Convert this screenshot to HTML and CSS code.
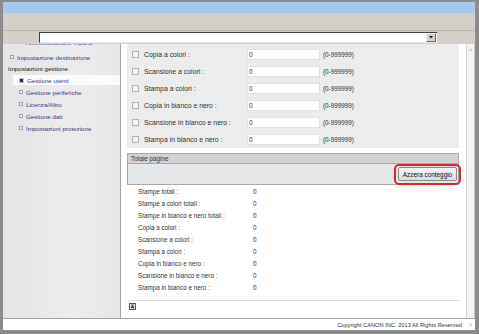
FILE: index.html
```html
<!DOCTYPE html>
<html>
  <head>
    <meta charset="UTF-8" />
    <title>Gestione utenti | Contatore</title>
    <link rel="stylesheet" href="styles.css">
  </head>
  <body>
    <div class="window">
      <div class="titlebar"></div>
      <div class="toolbar"></div>
      <div class="address">
        <div class="address-field">
          <span class="drop">
            <svg viewBox="0 0 5 3" class="drop-arrow"><path d="M0 0h5L2.5 3z"></path></svg>
          </span>
        </div>
      </div>
      <div class="content">
        <ul class="menu">
          <li class="menu-item menu-cut"><span class="bullet"></span>Amministrazione reparto</li>
          <li class="menu-item menu-top"><span class="bullet"></span>Impostazione destinazione</li>
          <li class="menu-group">Impostazioni gestione</li>
          <li class="menu-item menu-sub active"><span class="bullet"></span>Gestione utenti</li>
          <li class="menu-item menu-sub"><span class="bullet"></span>Gestione periferiche</li>
          <li class="menu-item menu-sub"><span class="bullet"></span>Licenza/Altro</li>
          <li class="menu-item menu-sub"><span class="bullet"></span>Gestione dati</li>
          <li class="menu-item menu-sub"><span class="bullet"></span>Impostazioni protezione</li>
        </ul>
        <div class="main">
          <div class="limits">
            <div class="limit-row">
              <span class="check"></span>
              <span class="limit-label">Copia a colori :</span>
              <input type="text" class="limit-input" value="0" />
              <span class="limit-range">(0-999999)</span>
            </div>
            <div class="limit-row">
              <span class="check"></span>
              <span class="limit-label">Scansione a colori :</span>
              <input type="text" class="limit-input" value="0" />
              <span class="limit-range">(0-999999)</span>
            </div>
            <div class="limit-row">
              <span class="check"></span>
              <span class="limit-label">Stampa a colori :</span>
              <input type="text" class="limit-input" value="0" />
              <span class="limit-range">(0-999999)</span>
            </div>
            <div class="limit-row">
              <span class="check"></span>
              <span class="limit-label">Copia in bianco e nero :</span>
              <input type="text" class="limit-input" value="0" />
              <span class="limit-range">(0-999999)</span>
            </div>
            <div class="limit-row">
              <span class="check"></span>
              <span class="limit-label">Scansione in bianco e nero :</span>
              <input type="text" class="limit-input" value="0" />
              <span class="limit-range">(0-999999)</span>
            </div>
            <div class="limit-row">
              <span class="check"></span>
              <span class="limit-label">Stampa in bianco e nero :</span>
              <input type="text" class="limit-input" value="0" />
              <span class="limit-range">(0-999999)</span>
            </div>
          </div>

          <div class="section-head">Totale pagine</div>
          <div class="section-bar">
            <div class="reset-wrap">
              <button class="reset">Azzera conteggio</button>
              <span class="callout"></span>
            </div>
          </div>

          <div class="totals">
            <div class="total-row"><span class="total-label">Stampe totali :</span><span>0</span></div>
            <div class="total-row"><span class="total-label">Stampe a colori totali :</span><span>0</span></div>
            <div class="total-row"><span class="total-label">Stampe in bianco e nero totali :</span><span>0</span></div>
            <div class="total-row"><span class="total-label">Copia a colori :</span><span>0</span></div>
            <div class="total-row"><span class="total-label">Scansione a colori :</span><span>0</span></div>
            <div class="total-row"><span class="total-label">Stampa a colori :</span><span>0</span></div>
            <div class="total-row"><span class="total-label">Copia in bianco e nero :</span><span>0</span></div>
            <div class="total-row"><span class="total-label">Scansione in bianco e nero :</span><span>0</span></div>
            <div class="total-row"><span class="total-label">Stampa in bianco e nero :</span><span>0</span></div>
          </div>

          <div class="page-end">
            <svg viewBox="0 0 7 7" class="to-top">
              <rect x="0.5" y="0.5" width="6" height="6" fill="#f4f4f4" stroke="#555"></rect>
              <path d="M2 2h3M3.5 2.8L2 4.8h3z" stroke="#222" stroke-width="0.8" fill="#222"></path>
            </svg>
          </div>
        </div>
        <div class="scrollbar"><span class="scroll-mark">&#708;</span></div>
      </div>
      <div class="footer">
        <span class="copyright">Copyright CANON INC. 2013 All Rights Reserved</span>
        <span class="footer-scroll">&#709;</span>
      </div>
    </div>
  </body>
</html>
```

FILE: styles.css
```css
:root {
  --chrome: #d4d0c8;
  --panel: #ececec;
  --line: #a8a8a8;
  --ink: #333;
  --link: #3a3a80;
}

body {
  margin: 0;
  font-family: "Liberation Sans", Arial, sans-serif;
  color: var(--ink);
}

.window {
  width: 479px;
  height: 334px;
  box-sizing: border-box;
  border: 3px solid #8c8c8c;
  border-top-width: 2px;
  border-right-width: 4px;
  border-bottom-width: 4px;
  display: flex;
  flex-direction: column;
  overflow: hidden;
}

.titlebar {
  height: 11px;
  background: #a7c8ef;
}

.toolbar {
  height: 17px;
  background: var(--chrome);
  border-bottom: 1px solid #bcb8b0;
}

.address {
  height: 13px;
  background: var(--chrome);
  padding-left: 36px;
  display: flex;
}

.address-field {
  width: 398px;
  height: 11px;
  margin-top: 1px;
  box-sizing: border-box;
  background: #fff;
  border-top: 1px solid #404040;
  border-left: 1px solid #404040;
  border-bottom: 1px solid #e8e8e8;
  display: flex;
  justify-content: flex-end;
}

.drop {
  width: 10px;
  height: 9px;
  margin-right: 1px;
  box-sizing: border-box;
  background: var(--chrome);
  border: 1px solid;
  border-color: #f4f4f4 #6a6a6a #6a6a6a #f4f4f4;
  display: flex;
  align-items: center;
  justify-content: center;
}

.drop-arrow {
  width: 4px;
  fill: #111;
}

.content {
  height: 274px;
  display: flex;
}

/* left menu */

.menu {
  width: 117px;
  margin: 0;
  padding: 0;
  list-style: none;
  font-size: 6.2px;
  background: linear-gradient(90deg, #e4e4e6 0%, #ececee 60%, #e6e6e8 100%);
  border-right: 1px solid #a4a4a4;
  overflow: hidden;
}

.menu-item {
  height: 12px;
  display: flex;
  align-items: center;
  gap: 2px;
  color: var(--link);
}

.menu-cut {
  margin-top: -8px;
  padding-left: 16px;
}

.menu-top {
  margin-top: 3px;
  padding-left: 7px;
}

.menu-group {
  height: 11px;
  display: flex;
  align-items: center;
  padding-left: 5px;
  color: #111;
}

.menu-sub {
  padding-left: 16px;
}

.bullet {
  width: 4px;
  height: 4px;
  box-sizing: border-box;
  border: 1px solid #9aa3b6;
  background: #f2f2f4;
  margin-right: 1px;
}

.menu-sub.active {
  height: 10px;
  margin: 1px 0 1px 10px;
  padding-left: 6px;
  background: #fafafa;
}

.active .bullet {
  width: 5px;
  height: 5px;
  background: #1d2b66;
  border-color: #b8c0d4;
}

/* main pane */

.main {
  width: 345px;
  background: #fff;
  display: flex;
  flex-direction: column;
  font-size: 6.3px;
}

.limits {
  margin-left: 6px;
  width: 332px;
  padding-top: 2px;
  background: var(--panel);
}

.limit-row {
  height: 17px;
  display: flex;
  align-items: center;
  padding-left: 5px;
}

.check {
  width: 7px;
  height: 7px;
  box-sizing: border-box;
  border: 1px solid #b2b2b2;
  background: #f4f4f4;
}

.limit-label {
  width: 103px;
  margin-left: 5px;
  font-size: 6.9px;
}

.limit-input {
  width: 73px;
  height: 11px;
  box-sizing: border-box;
  margin: 0;
  padding: 0 0 0 1px;
  border: 1px solid #e2e2e2;
  background: #fff;
  font: inherit;
  color: var(--ink);
  outline: none;
}

.limit-range {
  margin-left: 3px;
}

.section-head {
  margin: 5px 0 0 6px;
  width: 332px;
  height: 11px;
  box-sizing: border-box;
  padding-left: 3px;
  background: #d3d3d3;
  border: 1px solid var(--line);
  display: flex;
  align-items: center;
}

.section-bar {
  margin-left: 6px;
  width: 332px;
  height: 21px;
  box-sizing: border-box;
  padding: 3px 1px 0 0;
  background: #e5e7e9;
  border: 1px solid var(--line);
  border-top: none;
  display: flex;
  justify-content: flex-end;
  align-items: flex-start;
}

.reset-wrap {
  position: relative;
}

.reset {
  width: 59px;
  height: 14px;
  padding: 0;
  font: inherit;
  font-size: 6.4px;
  color: #111;
  background: linear-gradient(#f6f6f6, #dcdcdc);
  border: 1px solid #8a8a8a;
  border-radius: 2px;
  display: block;
}

.callout {
  position: absolute;
  top: -3px;
  left: -4px;
  right: -4px;
  bottom: -4px;
  border: 2px solid #e0232b;
  border-radius: 5px;
}

.totals {
  padding-left: 17px;
  display: flex;
  flex-direction: column;
}

.total-row {
  height: 12px;
  display: flex;
  align-items: center;
}

.total-label {
  width: 115px;
}

.page-end {
  margin: 7px 6px 0 7px;
  padding-top: 2px;
  border-top: 1px solid #dcdcdc;
  display: flex;
}

.to-top {
  width: 7px;
  height: 7px;
  margin-left: 1px;
}

.scrollbar {
  width: 9px;
  box-sizing: border-box;
  background: #f3f3f3;
  border-left: 1px solid #d2d2d2;
  border-right: 1px solid #c8c8c8;
  display: flex;
  justify-content: center;
  font-size: 6px;
  color: #9a9a9a;
}

.scroll-mark {
  margin-top: 3px;
}

.footer {
  height: 12px;
  box-sizing: border-box;
  background: #fff;
  border-top: 1px solid #a4a4a4;
  display: flex;
  align-items: center;
  justify-content: flex-end;
  font-size: 5.7px;
}

.copyright {
  margin-right: 4px;
}

.footer-scroll {
  width: 9px;
  align-self: stretch;
  display: flex;
  align-items: center;
  justify-content: center;
  color: #888;
  font-size: 6px;
}
```
